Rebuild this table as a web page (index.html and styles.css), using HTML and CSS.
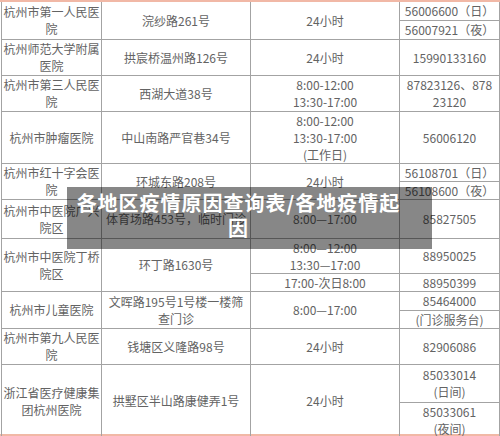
FILE: index.html
```html
<!DOCTYPE html>
<html lang="zh-CN">
<head>
<meta charset="utf-8">
<title>各地区疫情原因查询表</title>
<link rel="stylesheet" href="styles.css">
</head>
<body>
<div class="page">
  <table class="hosp">
    <colgroup><col class="c1"><col class="c2"><col class="c3"><col class="c4"></colgroup>
    <tbody>
      <tr class="r1"><td rowspan="2">杭州市第一人民医<br>院</td><td rowspan="2">浣纱路261号</td><td rowspan="2">24小时</td><td>56006600（日）</td></tr>
      <tr class="r2"><td>56007921（夜）</td></tr>
      <tr class="r3"><td>杭州师范大学附属<br>医院</td><td>拱宸桥温州路126号</td><td>24小时</td><td>15990133160</td></tr>
      <tr class="r4"><td>杭州市第三人民医<br>院</td><td>西湖大道38号</td><td>8:00-12:00<br>13:30-17:00</td><td>87823126、878<br>23120</td></tr>
      <tr class="r5"><td>杭州市肿瘤医院</td><td>中山南路严官巷34号</td><td>8:00-12:00<br>13:30-17:00<br>(工作日)</td><td>56006120</td></tr>
      <tr class="r6"><td rowspan="2">杭州市红十字会医<br>院</td><td rowspan="2">环城东路208号</td><td rowspan="2">24小时</td><td>56108701（日）</td></tr>
      <tr class="r7"><td>56108600（夜）</td></tr>
      <tr class="r8"><td>杭州市中医院广兴<br>院区</td><td>体育场路453号，临时门诊</td><td>8:00—17:00</td><td>85827505</td></tr>
      <tr class="r9"><td rowspan="2">杭州市中医院丁桥<br>院区</td><td rowspan="2">环丁路1630号</td><td>8:00—12:00<br>13:30—17:00</td><td>88950025</td></tr>
      <tr class="r10"><td>17:00-次日8:00</td><td>88950399</td></tr>
      <tr class="r11"><td rowspan="2">杭州市儿童医院</td><td rowspan="2">文晖路195号1号楼一楼筛<br>查门诊</td><td rowspan="2">8:00—17:00</td><td>85464000</td></tr>
      <tr class="r12"><td>(门诊服务台)</td></tr>
      <tr class="r13"><td>杭州市第九人民医<br>院</td><td>钱塘区义隆路98号</td><td>24小时</td><td>82906086</td></tr>
      <tr class="r14"><td rowspan="2">浙江省医疗健康集<br>团杭州医院</td><td rowspan="2">拱墅区半山路康健弄1号</td><td rowspan="2">24小时</td><td>85033014<br>(日间)</td></tr>
      <tr class="r15"><td>85033061<br>(夜间)</td></tr>
    </tbody>
  </table>
  <div class="caption">各地区疫情原因查询表/各地疫情起因</div>
</div>
</body>
</html>
```

FILE: styles.css
```css
html, body {
  margin: 0;
  padding: 0;
  background: #ffffff;
}

body {
  width: 500px;
  height: 436px;
  overflow: hidden;
  font-family: "Noto Sans CJK SC", "Noto Sans", sans-serif;
}

.page {
  position: relative;
  width: 500px;
  height: 436px;
  box-sizing: border-box;
  border-top: 2px solid #f1b8a6;
  border-bottom: 2px solid #f1b8a6;
}

.hosp {
  margin-left: 1px;
  width: 498px;
  table-layout: fixed;
  border-collapse: collapse;
  font-size: 12px;
  line-height: 17px;
  color: #636363;
}

.c1 { width: 100px; }
.c2 { width: 149px; }
.c3 { width: 149px; }
.c4 { width: 100px; }

.hosp td {
  border: 1px solid #a3a3a3;
  padding: 0;
  text-align: center;
  vertical-align: middle;
  white-space: nowrap;
  overflow: hidden;
}

.hosp tr:first-child td {
  border-top: none;
}

.r1 { height: 18px; }
.r2 { height: 19px; }
.r3 { height: 36px; }
.r4 { height: 36px; }
.r5 { height: 52px; }
.r6 { height: 18px; }
.r7 { height: 17px; }
.r8 { height: 39px; }
.r9 { height: 35px; }
.r10 { height: 17px; }
.r11 { height: 19px; }
.r12 { height: 18px; }
.r13 { height: 36px; }
.r14 { height: 38px; }
.r15 { height: 34px; }

.caption {
  position: absolute;
  left: 67px;
  top: 185px;
  width: 365px;
  height: 62px;
  box-sizing: border-box;
  padding: 3px 30px 0 8px;
  background: rgba(0, 0, 0, 0.47);
  color: #ffffff;
  font-size: 20px;
  font-weight: 700;
  letter-spacing: 1px;
  line-height: 25px;
  text-align: center;
}
```
